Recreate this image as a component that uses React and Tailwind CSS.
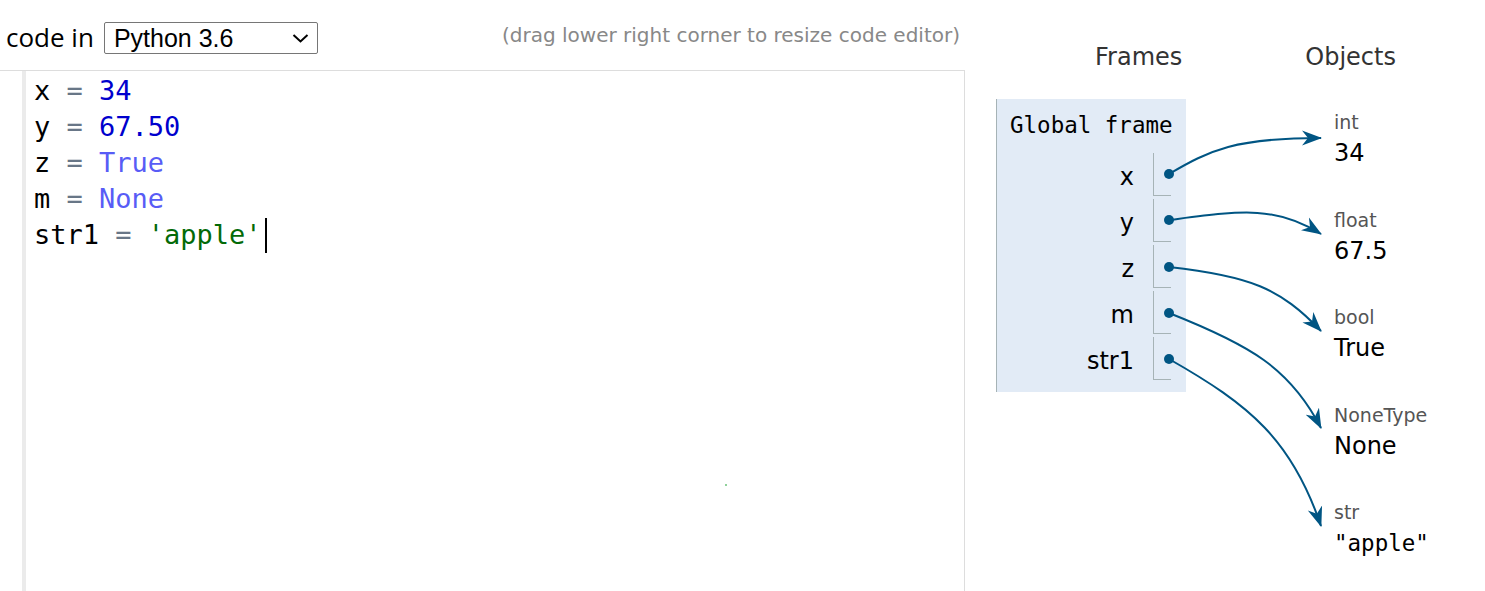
import React from "react";

function Code() {
  const op = "text-[#687687]";
  const num = "text-[#0000CD]";
  const lang = "text-[#585CF6]";
  const str = "text-[#036A07]";
  return (
    <div className="font-['DejaVu_Sans_Mono',monospace] text-[27px] leading-[36px] text-black whitespace-pre">
      <div>x <span className={op}>=</span> <span className={num}>34</span></div>
      <div>y <span className={op}>=</span> <span className={num}>67.50</span></div>
      <div>z <span className={op}>=</span> <span className={lang}>True</span></div>
      <div>m <span className={op}>=</span> <span className={lang}>None</span></div>
      <div className="flex items-center">
        <span>str1 <span className={op}>=</span> <span className={str}>'apple'</span></span>
        <span className="ml-[3px] inline-block w-[2px] h-[35px] bg-black" />
      </div>
    </div>
  );
}

const rows = ["x", "y", "z", "m", "str1"];

const objects = [
  { type: "int", value: "34" },
  { type: "float", value: "67.5" },
  { type: "bool", value: "True" },
  { type: "NoneType", value: "None" },
  { type: "str", value: '"apple"', mono: true },
];

function Arrows() {
  const c = "#005583";
  const paths = [
    "M1169 174 C1210 150, 1235 138, 1321 138",
    "M1169 220 C1240 211, 1275 205, 1321 234",
    "M1169 267 C1250 276, 1280 288, 1321 331",
    "M1169 313 C1250 345, 1290 368, 1321 428",
    "M1169 359 C1250 405, 1292 440, 1321 526",
  ];
  const dots = [174, 220, 267, 313, 359];
  return (
    <svg
      className="absolute left-0 top-0 pointer-events-none"
      width="1485"
      height="591"
      viewBox="0 0 1485 591"
    >
      <defs>
        <marker
          id="ah"
          markerUnits="userSpaceOnUse"
          markerWidth="22"
          markerHeight="16"
          refX="19"
          refY="8"
          orient="auto"
        >
          <path d="M0 0.5 L20 8 L0 15.5 L6 8 Z" fill={c} />
        </marker>
      </defs>
      {paths.map((d, i) => (
        <path key={i} d={d} fill="none" stroke={c} strokeWidth="2" markerEnd="url(#ah)" />
      ))}
      {dots.map((y, i) => (
        <circle key={i} cx="1169" cy={y} r="5" fill={c} />
      ))}
    </svg>
  );
}

export default function App() {
  return (
    <div className="relative w-[1485px] h-[591px] overflow-hidden bg-white flex">
      {/* Left: editor column */}
      <div className="w-[965px] flex flex-col shrink-0">
        <div className="h-[70px] shrink-0 flex items-start pl-[6px] pr-[5px]">
          <span className="mt-[20px] font-['Open_Sans',sans-serif] text-[26px] leading-[34px] text-black">
            code in
          </span>
          <div className="ml-[10px] mt-[22px] w-[214px] h-[32px] border border-[#767676] rounded-[2px] flex items-center justify-between pl-[9px] pr-[8px]">
            <span className="font-['Liberation_Sans',Arial,sans-serif] text-[25px] leading-[30px] text-black">
              Python 3.6
            </span>
            <svg width="17" height="10" viewBox="0 0 17 10">
              <polyline points="1.5,2 8.5,8.5 15.5,2" fill="none" stroke="#000" strokeWidth="2" />
            </svg>
          </div>
          <span className="ml-auto mt-[22px] font-['DejaVu_Sans',Verdana,sans-serif] text-[20px] leading-[26px] text-[#888888]">
            (drag lower right corner to resize code editor)
          </span>
        </div>
        <div className="relative flex-1 flex border-t border-r border-[#dddddd]">
          <div className="w-[22px] shrink-0" />
          <div className="w-[4px] shrink-0 bg-[#ebebeb]" />
          <div className="pl-[8px] pt-[2px]">
            <Code />
          </div>
          <div className="absolute left-[725px] top-[413px] w-[2px] h-[2px] bg-[#8fd19a]" />
        </div>
      </div>

      {/* Right: frames and objects */}
      <div className="ml-[31px] flex flex-col">
        <div className="h-[99px] shrink-0 flex items-start font-['DejaVu_Sans',Verdana,sans-serif] text-[24px] leading-[30px] text-[#333333]">
          <span className="ml-[99px] mt-[42px]">Frames</span>
          <span className="ml-[123px] mt-[42px]">Objects</span>
        </div>
        <div className="flex items-start shrink-0">
          <div className="w-[190px] bg-[#e2ebf6] border-l border-[#a6b3b6] pb-[12px]">
            <div className="pl-[13px] mt-[13px] font-['DejaVu_Sans_Mono',monospace] text-[22.5px] leading-[26px] text-black">
              Global frame
            </div>
            <div className="mt-[15px] flex flex-col gap-[3px]">
              {rows.map((r) => (
                <div key={r} className="flex items-center justify-end pr-[15px] h-[43px]">
                  <span className="mr-[19px] mt-[4px] font-['DejaVu_Sans',Verdana,sans-serif] text-[24px] leading-[30px] text-black">
                    {r}
                  </span>
                  <div className="w-[18px] h-[43px] border-l border-b border-[#a6b3b6]" />
                </div>
              ))}
            </div>
          </div>
          <div className="ml-[148px] mt-[11px] flex flex-col">
            {objects.map((o) => (
              <div key={o.type} className="h-[97.5px] shrink-0">
                <div className="font-['DejaVu_Sans',Verdana,sans-serif] text-[19px] leading-[24px] text-[#555555]">
                  {o.type}
                </div>
                <div
                  className={
                    o.mono
                      ? "mt-[4px] font-['DejaVu_Sans_Mono',monospace] text-[22.5px] leading-[30px] text-black"
                      : "mt-[4px] font-['DejaVu_Sans',Verdana,sans-serif] text-[24px] leading-[30px] text-black"
                  }
                >
                  {o.value}
                </div>
              </div>
            ))}
          </div>
        </div>
      </div>

      <Arrows />
    </div>
  );
}
